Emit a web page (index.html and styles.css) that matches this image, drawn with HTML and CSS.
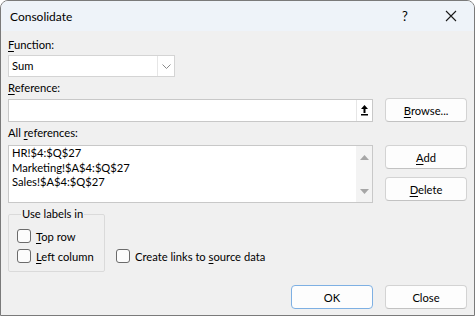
FILE: index.html
```html
<!DOCTYPE html>
<html lang="en">
<head>
  <meta charset="UTF-8" />
  <title>Consolidate</title>
  <link rel="stylesheet" href="styles.css">
</head>
<body>
  <div class="window">
    <div class="titlebar">
      <span class="title">Consolidate</span>
      <span class="help">?</span>
      <span class="close-x">
        <svg width="12" height="12" viewBox="0 0 12 12"><path d="M1 1 L11 11 M11 1 L1 11" stroke="#1a1a1a" stroke-width="1.1" fill="none"/></svg>
      </span>
    </div>

    <div class="content">
      <div class="label first"><u>F</u>unction:</div>
      <div class="select">
        <span class="select-value">Sum</span>
        <span class="select-btn">
          <svg width="9" height="5" viewBox="0 0 9 5"><path d="M0.5 0.5 L4.5 4.5 L8.5 0.5" stroke="#8a8a8a" stroke-width="1" fill="none"/></svg>
        </span>
      </div>

      <div class="label"><u>R</u>eference:</div>
      <div class="row">
        <div class="ref-input">
          <span class="ref-text"></span>
          <span class="ref-btn">
            <svg width="7" height="11" viewBox="0 0 7 11"><path d="M3.5 0 L7 4 L4.5 4 L4.5 8 L2.5 8 L2.5 4 L0 4 Z" fill="#000"/><rect x="0" y="9" width="7" height="1.5" fill="#000"/></svg>
          </span>
        </div>
        <button class="btn btn-browse"><u>B</u>rowse...</button>
      </div>

      <div class="label">All <u>r</u>eferences:</div>
      <div class="row list-row">
        <div class="list">
          <div class="list-items">
            <div>HR!$4:$Q$27</div>
            <div>Marketing!$A$4:$Q$27</div>
            <div>Sales!$A$4:$Q$27</div>
          </div>
          <div class="scroll">
            <svg width="9" height="5" viewBox="0 0 9 5"><path d="M0 5 L4.5 0 L9 5 Z" fill="#a6a6a6"/></svg>
            <svg width="9" height="5" viewBox="0 0 9 5"><path d="M0 0 L4.5 5 L9 0 Z" fill="#a6a6a6"/></svg>
          </div>
        </div>
        <div class="side-btns">
          <button class="btn"><u>A</u>dd</button>
          <button class="btn"><u>D</u>elete</button>
        </div>
      </div>

      <div class="options">
        <fieldset class="group">
          <legend>Use labels in</legend>
          <label class="check"><span class="box"></span><span><u>T</u>op row</span></label>
          <label class="check"><span class="box"></span><span><u>L</u>eft column</span></label>
        </fieldset>
        <label class="check links"><span class="box"></span><span>Create links to <u>s</u>ource data</span></label>
      </div>

      <div class="footer">
        <button class="btn btn-ok">OK</button>
        <button class="btn">Close</button>
      </div>
    </div>
  </div>
</body>
</html>
```

FILE: styles.css
```css
* {
  box-sizing: border-box;
}

body {
  margin: 0;
  background: #ffffff;
  font-family: "Segoe UI", Lato, sans-serif;
  font-size: 11.2px;
  color: #000;
}

u {
  text-decoration: underline;
  text-underline-offset: 2px;
}

.window {
  width: 475px;
  height: 316px;
  border: 1px solid #7a7a7a;
  border-radius: 8px 8px 0 0;
  background: #f0f0f0;
  overflow: hidden;
}

.titlebar {
  height: 30px;
  background: #eef3f9;
  display: flex;
  align-items: center;
  padding-left: 9px;
}

.title {
  font-size: 12px;
  flex: 1;
}

.help {
  width: 46px;
  text-align: center;
  font-size: 13px;
}

.close-x {
  width: 46px;
  display: flex;
  justify-content: center;
}

.content {
  padding: 0 7px;
}

.label {
  height: 16px;
  line-height: 16px;
  margin-top: 3px;
}

.label.first {
  margin-top: 6px;
}

.select {
  margin-top: 2px;
  width: 167px;
  height: 22px;
  background: #fff;
  border: 1px solid #d4d4d4;
  display: flex;
}

.select-value {
  flex: 1;
  padding-left: 3px;
  line-height: 20px;
}

.select-btn {
  width: 17px;
  border-left: 1px solid #e6e6e6;
  display: flex;
  align-items: center;
  justify-content: center;
}

.row {
  display: flex;
  gap: 12px;
  align-items: center;
  margin-top: 2px;
}

.ref-input {
  width: 367px;
  height: 23px;
  background: #fff;
  border: 1px solid #c8c8c8;
  display: flex;
}

.ref-text {
  flex: 1;
}

.ref-btn {
  width: 16px;
  border-left: 1px solid #e6e6e6;
  display: flex;
  align-items: center;
  justify-content: center;
}

.btn {
  width: 82px;
  height: 24px;
  padding: 0;
  background: #fdfdfd;
  border: 1px solid #d3d3d3;
  border-bottom-color: #c2c2c2;
  border-radius: 4px;
  font-family: inherit;
  font-size: 11.2px;
  color: #000;
}

.list-row {
  align-items: flex-start;
  margin-top: 4px;
}

.list {
  width: 367px;
  height: 58px;
  background: #fff;
  border: 1px solid #c8c8c8;
  display: flex;
}

.list-items {
  flex: 1;
  padding: 0 3px;
  line-height: 14.5px;
}

.scroll {
  width: 16px;
  background: #f3f3f3;
  display: flex;
  flex-direction: column;
  align-items: center;
  justify-content: space-between;
  padding: 9px 0 8px;
}

.side-btns {
  display: flex;
  flex-direction: column;
  gap: 8px;
}

.options {
  display: flex;
  align-items: flex-end;
  gap: 11px;
  margin-top: 3px;
}

.group {
  margin: 0;
  width: 97px;
  padding: 4px 0 5px 8px;
  border: 1px solid #dadada;
  border-radius: 2px;
}

.group legend {
  padding: 0 1px;
  margin-left: 4px;
  line-height: 16px;
}

.check {
  display: flex;
  align-items: center;
  gap: 5px;
  height: 20px;
}

.box {
  width: 14px;
  height: 14px;
  border: 1px solid #6b6b6b;
  border-radius: 3px;
  background: #fcfcfc;
}

.links {
  margin-bottom: 6px;
}

.footer {
  display: flex;
  justify-content: flex-end;
  gap: 12px;
  margin-top: 13px;
}

.btn-ok {
  border-color: #7eb0e3;
}
```
